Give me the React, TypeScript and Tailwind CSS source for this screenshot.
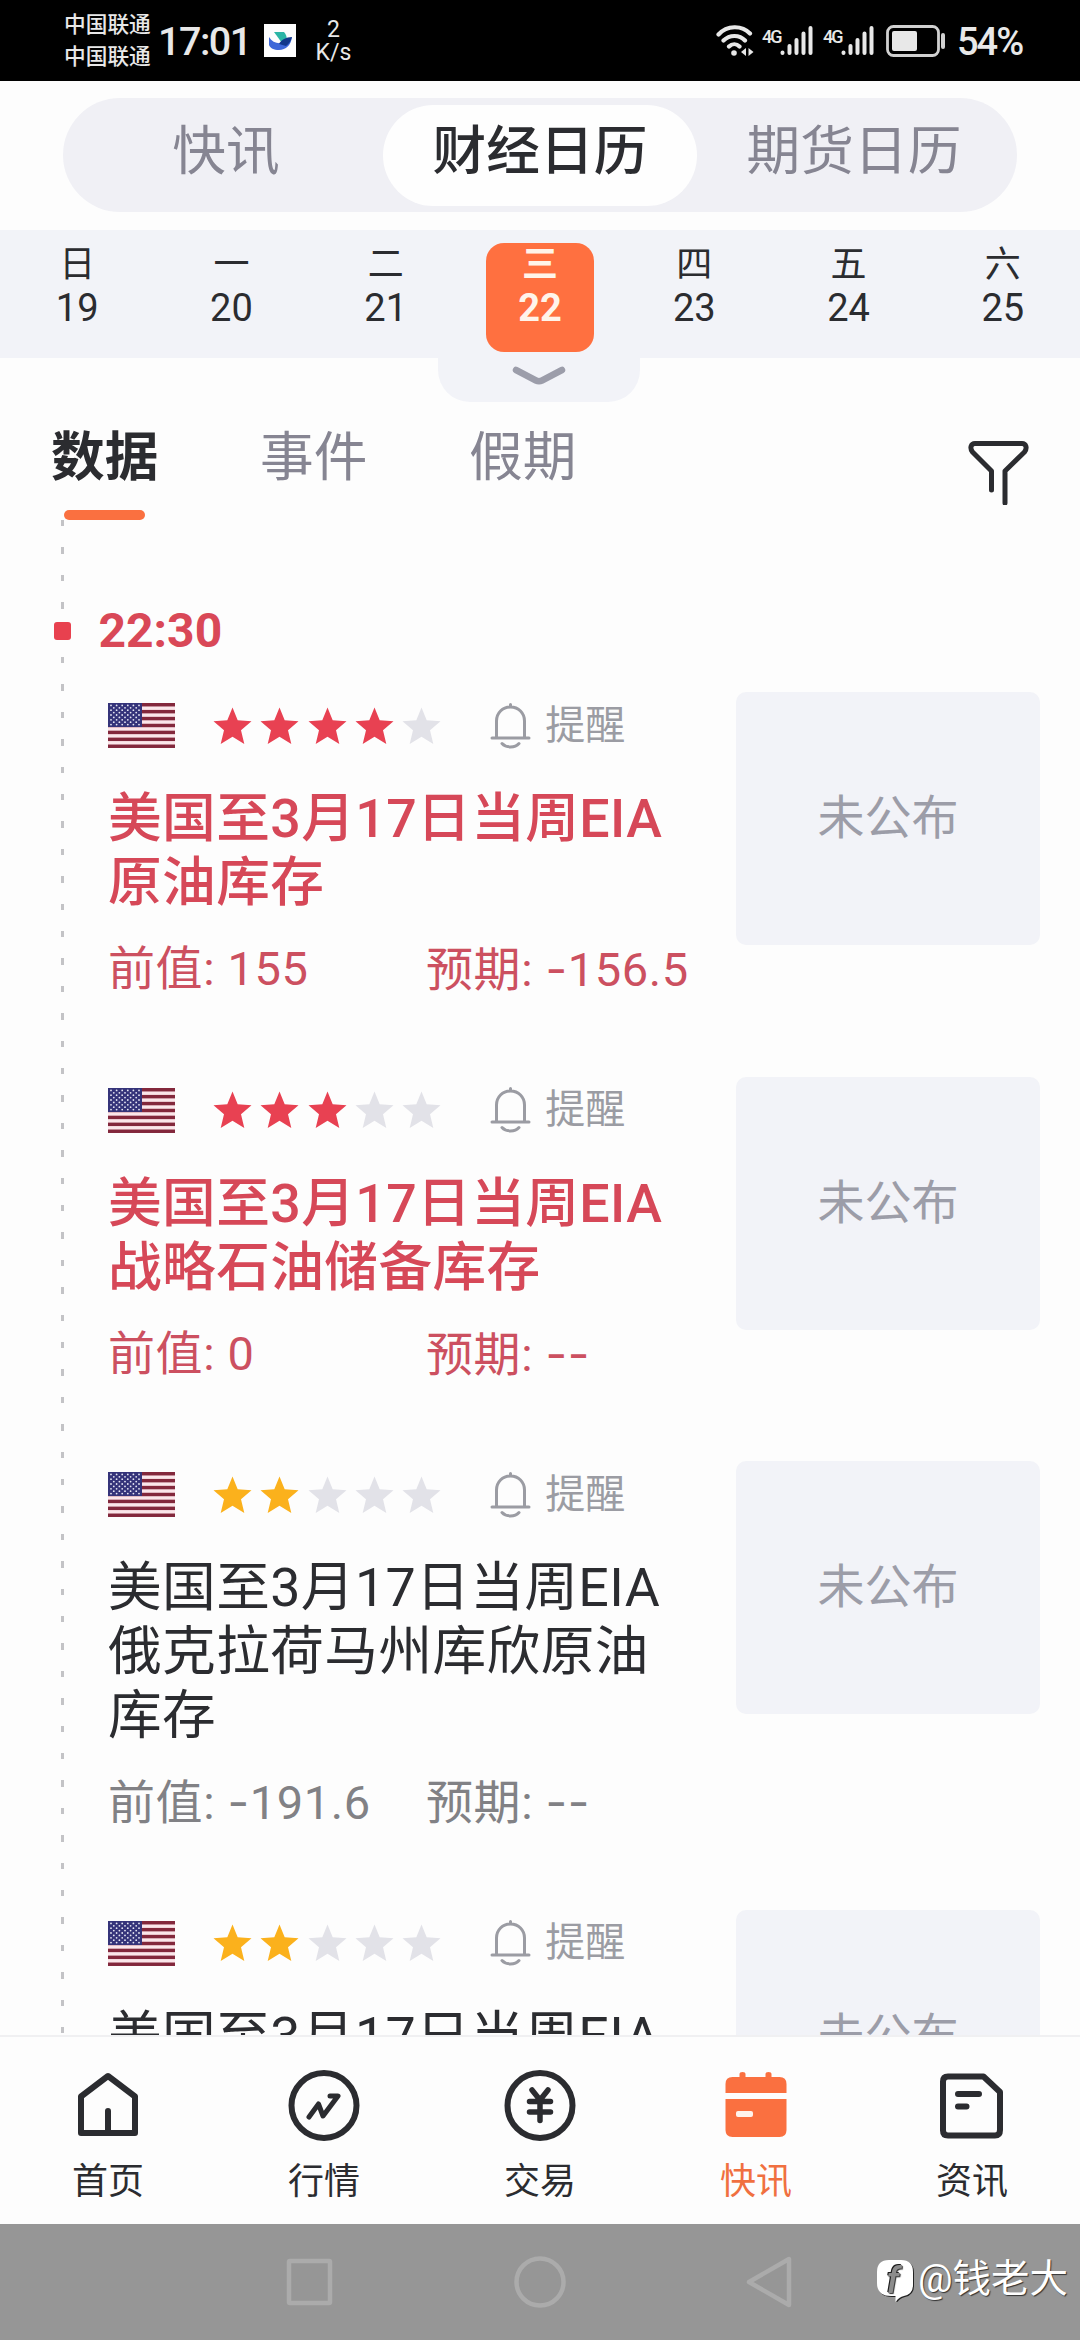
import React, { FunctionComponent, ReactNode } from "react";

type CalendarItem = {
  stars: number;
  important: boolean;
  title: string;
  previous?: string;
  forecast?: string;
};

const days = [
  { week: "日", date: 19 },
  { week: "一", date: 20 },
  { week: "二", date: 21 },
  { week: "三", date: 22 },
  { week: "四", date: 23 },
  { week: "五", date: 24 },
  { week: "六", date: 25 },
];

const items: CalendarItem[] = [
  { stars: 4, important: true, title: "美国至3月17日当周EIA原油库存", previous: "155", forecast: "-156.5" },
  { stars: 3, important: true, title: "美国至3月17日当周EIA战略石油储备库存", previous: "0", forecast: "--" },
  { stars: 2, important: false, title: "美国至3月17日当周EIA俄克拉荷马州库欣原油库存", previous: "-191.6", forecast: "--" },
  { stars: 2, important: false, title: "美国至3月17日当周EIA" },
];

const Signal: FunctionComponent = () => (
  <div className="flex">
    <span className="w-[18px] text-[18px] leading-[24px] font-medium tracking-[-2px]">4G</span>
    <svg width="34" height="32" viewBox="0 0 34 32" stroke="#e8e8e8" strokeWidth="4" strokeLinecap="round">
      <path d="M2.500 28v-.5M9.500 28v-7M16.500 28V15M23.500 28V8.500M30.500 28V3" />
    </svg>
  </div>
);

const StatusBar: FunctionComponent = () => (
  <div className="flex h-[81px] shrink-0 items-center bg-black pl-16 text-[#e8e8e8]">
    <div className="flex w-[94px] flex-col text-[21.700px] leading-8 font-medium">
      <span>中国联通</span>
      <span>中国联通</span>
    </div>
    <span className="w-[106px] pt-[3px] text-[39.500px] leading-none font-medium tracking-[-1.500px] whitespace-nowrap">17:01</span>
    <svg width="32" height="33" viewBox="0 0 32 33">
      <rect width="32" height="33" fill="#fdfdfd" />
      <path d="M10 8h10c2 2 3 5 3 9l-5 2z" fill="#2cb5a6" />
      <path d="M5 13c3 5 8 7 13 6l10-6c-1 8-6 13-13 13-5 0-9-2-10-5z" fill="#3e68d8" />
      <path d="M15 20c2-4 7-7 13-7-1 4-3 7-6 9z" fill="#12388a" />
    </svg>
    <div className="ml-5 flex w-[35px] flex-col items-center text-[23px] leading-[23px]">
      <span>2</span>
      <span>K/s</span>
    </div>
    <div className="ml-[365px] flex items-center">
      <svg width="38" height="34" viewBox="0 0 38 34" fill="none" stroke="#e8e8e8" strokeWidth="4.200" strokeLinecap="round">
        <path d="M2.500 10.500C11 1 26 1 34 9.500M7.500 16.500c6-6 16-6 21.500 0M13 22.500c3-3 7.500-3 10.500 0" />
        <circle cx="18" cy="29" r="2.800" fill="#e8e8e8" stroke="none" />
        <path d="M30 24v8l-5-4zM32.500 24v8l5-4z" fill="#e8e8e8" stroke="none" />
      </svg>
      <div className="ml-2 flex gap-[9px]">
        <Signal />
        <Signal />
      </div>
      <svg className="ml-[11px]" width="61" height="34" viewBox="0 0 61 34">
        <rect x="1.500" y="2.500" width="51" height="29" rx="6" fill="none" stroke="#d0d0d0" strokeWidth="2.800" />
        <rect x="6" y="7" width="25" height="20" rx="2" fill="#e8e8e8" />
        <rect x="55" y="9" width="4" height="16" rx="2" fill="#d0d0d0" />
      </svg>
      <span className="ml-2.5 pt-[2px] text-[38px] leading-none font-medium tracking-[-2px]">54%</span>
    </div>
  </div>
);

const SegmentTabs: FunctionComponent = () => (
  <div className="h-[149px] shrink-0 px-[63px] pt-[17px]">
    <div className="flex h-[114px] items-center rounded-full bg-[#f0f0f5] px-[6px] text-[53.700px] leading-none text-[#868592]">
      <div className="w-[314px] pb-[6px] text-center">快讯</div>
      <div className="flex h-[101px] w-[314px] items-center justify-center rounded-full bg-[#fefefe] pb-[6px] font-medium text-[#2b2c30]">
        财经日历
      </div>
      <div className="w-[314px] pb-[6px] text-center">期货日历</div>
    </div>
  </div>
);

const WeekStrip: FunctionComponent = () => (
  <div className="relative z-10 flex h-32 shrink-0 bg-[#f2f3f8]">
    {days.map((day) => (
      <div key={day.date} className="flex flex-1 justify-center pt-[13px]">
        <div
          className={
            day.date === 22
              ? "flex h-[109px] w-[108px] flex-col items-center rounded-[18px] bg-[#ff7040] font-bold text-[#fff4ea]"
              : "flex h-[109px] w-[108px] flex-col items-center text-[#2b2c30]"
          }
        >
          <span className="h-[43px] text-[36px] leading-[44px]">{day.week}</span>
          <span className="text-[38px] leading-[44px]">{day.date}</span>
        </div>
      </div>
    ))}
    <div className="absolute top-full left-[438px] flex h-11 w-[202px] justify-center rounded-b-[32px] bg-[#f2f3f8] pt-2">
      <svg width="54" height="20" viewBox="0 0 54 20" fill="none" stroke="#9c9daa" strokeWidth="6.500" strokeLinecap="round" strokeLinejoin="round">
        <path d="M4 4l20 10.500q3 1.500 6 0L50 4" />
      </svg>
    </div>
  </div>
);

const Filters: FunctionComponent = () => (
  <div className="flex h-[162px] shrink-0 items-end justify-between px-[51px] text-[53.700px] leading-[64px] text-[#868592]">
    <div className="flex">
      <div className="flex w-[209px] flex-col gap-5 font-bold text-[#2b2c30]">
        数据
        <div className="ml-[13px] h-[10px] w-[81px] rounded-full bg-[#fa7040]" />
      </div>
      <div className="w-[209px]">事件</div>
      <div>假期</div>
    </div>
    <svg className="mb-[15px]" width="61" height="65" viewBox="0 0 61 65" fill="none" stroke="#2b2c30" strokeWidth="5" strokeLinecap="round" strokeLinejoin="round">
      <path d="M23.500 50V31L4.500 12C1.500 8 3 3.500 7 3.500h47c4 0 5.500 4.500 2.500 8.500L37 31v32" />
    </svg>
  </div>
);

const Flag: FunctionComponent = () => (
  <svg width="67" height="45" viewBox="0 0 67 45">
    <rect width="67" height="45" fill="#fbe6ea" />
    {[0, 1, 2, 3, 4, 5, 6].map((i) => (
      <rect key={i} y={i * 6.92} width="67" height="3.460" fill="#83283c" />
    ))}
    <rect width="34" height="24" fill="#35347a" />
    {[0, 1, 2, 3, 4, 5, 6, 7, 8].map((row) =>
      (row % 2 ? [0, 1, 2, 3, 4] : [0, 1, 2, 3, 4, 5]).map((col) => (
        <circle key={`${row}-${col}`} cx={3 + (row % 2) * 2.8 + col * 5.6} cy={2.4 + row * 2.4} r="0.900" fill="#e6e6f4" />
      ))
    )}
  </svg>
);

const Stars: FunctionComponent<{ count: number; color: string }> = ({ count, color }) => (
  <div className="ml-[38px] flex gap-[8.300px]">
    {[0, 1, 2, 3, 4].map((i) => (
      <svg key={i} width="39" height="38" viewBox="0 0 39 38" fill={i < count ? color : "#e2e2e8"}>
        <path d="M19.500 .5l5.200 12.700 13.800 1.100-10.500 9 3.300 13.700-11.800-7.300L7.700 37 11 23.300.500 14.300l13.800-1.100z" />
      </svg>
    ))}
  </div>
);

const Bell: FunctionComponent = () => (
  <svg width="41" height="46" viewBox="0 0 41 46" fill="none" stroke="#9b9ca3" strokeWidth="3" strokeLinecap="round">
    <path d="M20.500 1.500v2M2 35h37M6.500 34.500V18c0-8 6-14 14-14s14 6 14 14v16.500M12 40.500c4 4.500 13 4.500 17 0" />
  </svg>
);

const Value: FunctionComponent<{ text: string }> = ({ text }) => {
  const digits = text.replace(/^-+/, "");
  const minus = text.slice(0, text.length - digits.length);
  return (
    <>
      {minus && <span className="font-[Inter]">{minus}</span>}
      {digits}
    </>
  );
};

const Item: FunctionComponent<{ item: CalendarItem }> = ({ item }) => (
  <div className="flex items-start">
    <div className="w-[628px] shrink-0 pt-[11px] pb-[75.500px]">
      <div className="flex h-[45px] items-center">
        <Flag />
        <Stars count={item.stars} color={item.important ? "#e84152" : "#fbb11c"} />
        <div className="ml-[49px] flex items-center gap-[14px] text-[40px] leading-none text-[#9b9ca3]">
          <Bell />
          提醒
        </div>
      </div>
      <div
        className={
          item.important
            ? "mt-[39px] w-[575px] text-[53.700px] leading-[64px] font-medium tracking-[0.400px] break-all text-[#d64858]"
            : "mt-[39px] w-[575px] text-[53.700px] leading-[64px] tracking-[0.400px] break-all text-[#2b2c30]"
        }
      >
        {item.title}
      </div>
      {item.previous && item.forecast && (
        <div
          className={
            item.important
              ? "mt-[22px] flex h-16 text-[47px] leading-[64px] tracking-[0.600px] whitespace-pre text-[#cc5060]"
              : "mt-[22px] flex h-16 text-[47px] leading-[64px] tracking-[0.600px] whitespace-pre text-[#818185]"
          }
        >
          <span className="w-[318px]">前值: <Value text={item.previous} /></span>
          <span>预期: <Value text={item.forecast} /></span>
        </div>
      )}
    </div>
    <div className="flex h-[253px] w-[304px] items-center justify-center rounded-[10px] bg-[#f2f3f8] text-[47px] text-[#9c9da8]">
      未公布
    </div>
  </div>
);

const Timeline: FunctionComponent = () => (
  <div className="flex min-h-0 flex-1 overflow-hidden">
    <div className="ml-[61px] w-[3px] shrink-0 bg-[repeating-linear-gradient(to_bottom,#c3c3c6_0px,#c3c3c6_6.500px,transparent_6.500px,transparent_27.400px)]" />
    <div className="shrink-0 pt-[79px]">
      <div className="mb-[29px] flex h-16 items-center gap-[27.500px] text-[48px] font-bold text-[#d94857]">
        <span className="relative -ml-[10px] h-[18px] w-[17px] rounded-[3px] bg-[#e8414f]" />
        22:30
      </div>
      <div className="ml-11">
        {items.map((item, i) => (
          <Item key={i} item={item} />
        ))}
      </div>
    </div>
  </div>
);

const NavItem: FunctionComponent<{ label: string; active?: boolean; children: ReactNode }> = ({ label, active, children }) => (
  <div className={active ? "flex flex-1 flex-col items-center text-[#f07040]" : "flex flex-1 flex-col items-center text-[#2b2c30]"}>
    <svg width="72" height="72" viewBox="0 0 72 72" fill="none" stroke="currentColor" strokeWidth="6" strokeLinecap="round" strokeLinejoin="round">
      {children}
    </svg>
    <span className="mt-[18px] text-[36px] leading-[44px]">{label}</span>
  </div>
);

const BottomNav: FunctionComponent = () => (
  <div className="flex h-[189px] shrink-0 border-t-2 border-[#f0f0f2] bg-[#fdfdfd] pt-[33px]">
    <NavItem label="首页">
      <path d="M9 63V26.500L36 6l27 20.500V63zM36 41v21" />
    </NavItem>
    <NavItem label="行情">
      <circle cx="36" cy="35.500" r="32.500" />
      <path d="M21 47l9.500-13L35 46l15-20h-8" strokeWidth="5" />
    </NavItem>
    <NavItem label="交易">
      <circle cx="36" cy="35.500" r="32.500" />
      <path d="M28 20l8 10 8-10M25.500 31.500h21M25.500 42h21M36 30v20.500" strokeWidth="5.500" />
    </NavItem>
    <NavItem label="快讯" active>
      <g fill="#fa7040" stroke="none">
        <path d="M5.500 23v-9q0-7 7-7h7V4q0-2 3-2t3 2v3h20V4q0-2 3-2t3 2v3h8q7 0 7 7v9z" />
        <path d="M5.500 29h61v31q0 7-7 7h-47q-7 0-7-7z" />
        <rect x="16" y="41" width="17" height="6" rx="2" fill="#fff3ec" />
      </g>
    </NavItem>
    <NavItem label="资讯">
      <path d="M12 6.500h35.500L64 22v38q0 5.500-5 5.500H12q-5 0-5-5v-49q0-5 5-5zM22 24h21M22 36.500h8.500" />
    </NavItem>
  </div>
);

const SystemBar: FunctionComponent = () => (
  <div className="relative flex h-[116px] shrink-0 items-center bg-[#969696] pl-[283px]">
    <svg width="512" height="56" viewBox="0 0 512 56" fill="none" stroke="#ababab" strokeWidth="4.500" strokeLinejoin="round">
      <rect x="6" y="7" width="41" height="42" rx="1" />
      <circle cx="257" cy="28" r="23.500" />
      <path d="M506 5v46L466 28z" />
    </svg>
    <div className="absolute top-[32px] left-[876px] flex items-center gap-1 text-[38.500px] leading-[46px] whitespace-nowrap text-white [text-shadow:1px_1px_1px_#333]">
      <svg width="38" height="46" viewBox="0 0 38 46">
        <path d="M13 4h12q12 0 12 12v13q0 9-9 11-5 1-8.500 6v-6H15Q1 40 1 27V16Q1 4 13 4z" fill="#222" transform="translate(1 1)" />
        <path d="M13 4h12q12 0 12 12v13q0 9-9 11-5 1-8.500 6v-6H15Q1 40 1 27V16Q1 4 13 4z" fill="#fff" />
        <text x="10.500" y="37" fontSize="37" fontWeight="500" fontStyle="italic" fill="#8c8c8c" className="[filter:drop-shadow(-1px_-1px_0_#1c1c1c)]">
          f
        </text>
      </svg>
      @钱老大
    </div>
  </div>
);

const App: FunctionComponent = () => {
  return (
    <div className="flex h-[2340px] w-[1080px] flex-col overflow-hidden bg-[#fdfdfd] font-[Roboto,'Noto_Sans_CJK_SC',sans-serif]">
      <StatusBar />
      <SegmentTabs />
      <WeekStrip />
      <Filters />
      <Timeline />
      <BottomNav />
      <SystemBar />
    </div>
  );
};

export default App;
